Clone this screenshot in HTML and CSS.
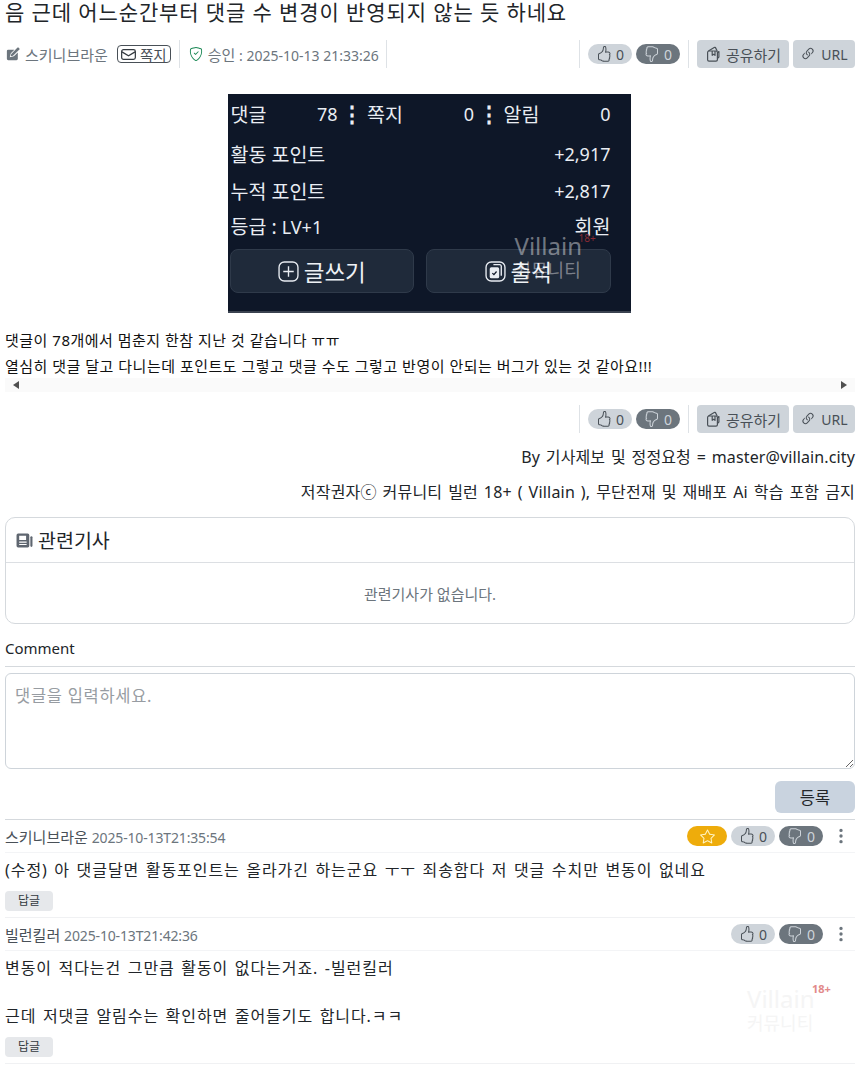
FILE: index.html
```html
<!DOCTYPE html>
<html lang="ko">
<head>
<meta charset="utf-8">
<title>게시글</title>
<link rel="stylesheet" href="styles.css">
</head>
<body>
<svg class="defs" width="0" height="0" aria-hidden="true">
  <symbol id="i-up" viewBox="0 0 16 16"><path d="M8.864.046C7.908-.193 7.02.53 6.956 1.466c-.072 1.051-.23 2.016-.428 2.59-.125.36-.479 1.013-1.04 1.639-.557.623-1.282 1.178-2.131 1.41C2.685 7.288 2 7.87 2 8.72v4.001c0 .845.682 1.464 1.448 1.545 1.07.114 1.564.415 2.068.723l.048.03c.272.165.578.348.97.484.397.136.861.217 1.466.217h3.5c.937 0 1.599-.477 1.934-1.064a1.86 1.86 0 0 0 .254-.912c0-.152-.023-.312-.077-.464.201-.263.38-.578.488-.901.11-.33.172-.762.004-1.149.069-.13.12-.269.159-.403.077-.27.113-.568.113-.857 0-.288-.036-.585-.113-.856a2 2 0 0 0-.138-.362 1.9 1.9 0 0 0 .234-1.734c-.206-.592-.682-1.1-1.2-1.272-.847-.282-1.803-.276-2.516-.211a10 10 0 0 0-.443.05 9.4 9.4 0 0 0-.062-4.509A1.38 1.38 0 0 0 9.125.111zM11.5 14.721H8c-.51 0-.863-.069-1.14-.164-.281-.097-.506-.228-.776-.393l-.04-.024c-.555-.339-1.198-.731-2.49-.868-.333-.036-.554-.29-.554-.55V8.72c0-.254.226-.543.62-.65 1.095-.3 1.977-.996 2.614-1.708.635-.71 1.064-1.475 1.238-1.978.243-.7.407-1.768.482-2.85.025-.362.36-.594.667-.518l.262.066c.16.04.258.143.288.255a8.34 8.34 0 0 1-.145 4.725.5.5 0 0 0 .595.644l.003-.001.014-.003.058-.014a9 9 0 0 1 1.036-.157c.663-.06 1.457-.054 2.11.164.175.058.45.3.57.65.107.308.087.67-.266 1.022l-.353.353.353.354c.043.043.105.141.154.315.048.167.075.37.075.581 0 .212-.027.414-.075.582-.05.174-.111.272-.154.315l-.353.353.353.354c.047.047.109.177.005.488a2.2 2.2 0 0 1-.505.805l-.353.353.353.354c.006.005.041.05.041.17a.9.9 0 0 1-.121.416c-.165.288-.503.56-1.066.56z"/></symbol>
  <symbol id="i-down" viewBox="0 0 16 16"><path transform="matrix(-1 0 0 -1 16 16)" d="M8.864.046C7.908-.193 7.02.53 6.956 1.466c-.072 1.051-.23 2.016-.428 2.59-.125.36-.479 1.013-1.04 1.639-.557.623-1.282 1.178-2.131 1.41C2.685 7.288 2 7.87 2 8.72v4.001c0 .845.682 1.464 1.448 1.545 1.07.114 1.564.415 2.068.723l.048.03c.272.165.578.348.97.484.397.136.861.217 1.466.217h3.5c.937 0 1.599-.477 1.934-1.064a1.86 1.86 0 0 0 .254-.912c0-.152-.023-.312-.077-.464.201-.263.38-.578.488-.901.11-.33.172-.762.004-1.149.069-.13.12-.269.159-.403.077-.27.113-.568.113-.857 0-.288-.036-.585-.113-.856a2 2 0 0 0-.138-.362 1.9 1.9 0 0 0 .234-1.734c-.206-.592-.682-1.1-1.2-1.272-.847-.282-1.803-.276-2.516-.211a10 10 0 0 0-.443.05 9.4 9.4 0 0 0-.062-4.509A1.38 1.38 0 0 0 9.125.111zM11.5 14.721H8c-.51 0-.863-.069-1.14-.164-.281-.097-.506-.228-.776-.393l-.04-.024c-.555-.339-1.198-.731-2.49-.868-.333-.036-.554-.29-.554-.55V8.72c0-.254.226-.543.62-.65 1.095-.3 1.977-.996 2.614-1.708.635-.71 1.064-1.475 1.238-1.978.243-.7.407-1.768.482-2.85.025-.362.36-.594.667-.518l.262.066c.16.04.258.143.288.255a8.34 8.34 0 0 1-.145 4.725.5.5 0 0 0 .595.644l.003-.001.014-.003.058-.014a9 9 0 0 1 1.036-.157c.663-.06 1.457-.054 2.11.164.175.058.45.3.57.65.107.308.087.67-.266 1.022l-.353.353.353.354c.043.043.105.141.154.315.048.167.075.37.075.581 0 .212-.027.414-.075.582-.05.174-.111.272-.154.315l-.353.353.353.354c.047.047.109.177.005.488a2.2 2.2 0 0 1-.505.805l-.353.353.353.354c.006.005.041.05.041.17a.9.9 0 0 1-.121.416c-.165.288-.503.56-1.066.56z"/></symbol>
  <symbol id="i-share" viewBox="0 0 16 16"><g fill="none" stroke="currentColor" stroke-width="1.2" stroke-linejoin="round"><rect x="2.600" y="5" width="9.800" height="10.200" rx="1.400"/><path d="M3.400 5 9.200 1.500a1 1 0 0 1 1.400.4L12.200 5"/><path d="M12.400 6.500 13.900 5.600V11l-1.500 1.500"/><path d="M7.200 5v4.300l1.400-1 1.400 1V5"/></g></symbol>
  <symbol id="i-link" viewBox="0 0 16 16"><path d="M4.715 6.542 3.343 7.914a3 3 0 1 0 4.243 4.243l1.828-1.829A3 3 0 0 0 8.586 5.5L8 6.086a1 1 0 0 0-.154.199 2 2 0 0 1 .861 3.337L6.880 11.450a2 2 0 1 1-2.830-2.830l.793-.792a4 4 0 0 1-.128-1.287z"/><path d="M6.586 4.672A3 3 0 0 0 7.414 9.500l.775-.776a2 2 0 0 1-.896-3.346L9.120 3.550a2 2 0 1 1 2.830 2.830l-.793.792c.112.420.155.855.128 1.287l1.372-1.372a3 3 0 1 0-4.243-4.243z"/></symbol>
  <symbol id="i-dots" viewBox="0 0 16 16"><path d="M9.500 13a1.500 1.500 0 1 1-3 0 1.500 1.500 0 0 1 3 0m0-5a1.500 1.500 0 1 1-3 0 1.500 1.500 0 0 1 3 0m0-5a1.500 1.500 0 1 1-3 0 1.500 1.500 0 0 1 3 0"/></symbol>
</svg>

<main class="page">
  <h1 class="title">음 근데 어느순간부터 댓글 수 변경이 반영되지 않는 듯 하네요</h1>

  <div class="bar meta-bar">
    <span class="meta-item author">
      <svg class="ic" viewBox="0 0 16 16"><path d="M2.500 3H9.500L5.500 7 4.300 11.700 9 10.500l4.500-4.300v7.300a1.500 1.500 0 0 1-1.500 1.500H2.500A1.500 1.500 0 0 1 1 13.500v-9A1.500 1.500 0 0 1 2.500 3Z"/><path d="M13.200.700a.8.8 0 0 1 1.100 0l1 1a.8.8 0 0 1 0 1.100L8 10l-2.600.600L6 8Z"/></svg>
      스키니브라운
    </span>
    <span class="note-btn">
      <svg class="ic-mail" viewBox="0 0 16 16"><rect x=".7" y="2.700" width="14.600" height="10.600" rx="2" fill="none" stroke="currentColor" stroke-width="1.300"/><path d="M1 5.200 8 9.300l7-4.100" fill="none" stroke="currentColor" stroke-width="1.300"/></svg>
      쪽지
    </span>
    <span class="sep"></span>
    <span class="meta-item approved">
      <svg class="ic ic-green" viewBox="0 0 16 16"><path d="M5.338 1.590a61 61 0 0 0-2.837.856.48.48 0 0 0-.328.390c-.554 4.157.726 7.190 2.253 9.188a10.700 10.700 0 0 0 2.287 2.233c.346.244.652.420.893.533q.180.085.293.118a1 1 0 0 0 .101.025 1 1 0 0 0 .100-.025q.114-.034.294-.118c.240-.113.547-.290.893-.533a10.700 10.700 0 0 0 2.287-2.233c1.527-1.997 2.807-5.031 2.253-9.188a.48.48 0 0 0-.328-.390c-.651-.213-1.750-.560-2.837-.855C9.552 1.290 8.531 1.067 8 1.067c-.530 0-1.552.223-2.662.524zM5.072.560C6.157.265 7.310 0 8 0s1.843.265 2.928.560c1.110.300 2.229.655 2.887.870a1.540 1.540 0 0 1 1.044 1.262c.596 4.477-.787 7.795-2.465 9.990a11.800 11.800 0 0 1-2.517 2.453 7 7 0 0 1-1.048.625c-.280.132-.581.240-.829.240s-.548-.108-.829-.240a7 7 0 0 1-1.048-.625 11.800 11.800 0 0 1-2.517-2.453C1.928 10.487.545 7.169 1.141 2.692A1.540 1.540 0 0 1 2.185 1.430 63 63 0 0 1 5.072.560"/><path d="M10.854 5.146a.5.5 0 0 1 0 .708l-3 3a.5.5 0 0 1-.708 0l-1.500-1.500a.5.5 0 1 1 .708-.708L7.500 7.793l2.646-2.647a.5.5 0 0 1 .708 0"/></svg>
      <span><span class="ko">승인</span> : 2025-10-13 21:33:26</span>
    </span>
    <span class="sep sep-m"></span>
    <span class="spacer"></span>
    <span class="sep"></span>
    <span class="pill pill-up"><svg class="ic-vote"><use href="#i-up"/></svg>0</span>
    <span class="pill pill-down"><svg class="ic-vote"><use href="#i-down"/></svg>0</span>
    <span class="sep sep-b"></span>
    <span class="act"><svg class="ic-act"><use href="#i-share"/></svg>공유하기</span>
    <span class="act act-url"><svg class="ic-act"><use href="#i-link"/></svg>URL</span>
  </div>

  <div class="figure">
    <div class="shot">
      <div class="shot-top">
        <span class="cell"><span>댓글</span><span class="num">78</span></span>
        <b class="kebab">⋮</b>
        <span class="cell"><span>쪽지</span><span class="num">0</span></span>
        <b class="kebab">⋮</b>
        <span class="cell"><span>알림</span><span class="num">0</span></span>
      </div>
      <div class="shot-row r1"><span>활동 포인트</span><span class="num">+2,917</span></div>
      <div class="shot-row r2"><span>누적 포인트</span><span class="num">+2,817</span></div>
      <div class="shot-row r3"><span>등급 : <span class="num">LV+1</span></span><span>회원</span></div>
      <div class="shot-btns">
        <span class="shot-btn">
          <svg class="shot-ic" viewBox="0 0 20 20"><rect x="1" y="1" width="18" height="18" rx="5" fill="none" stroke="#e8ecf2" stroke-width="1.300"/><path d="M10 5v10M5 10h10" stroke="#e8ecf2" stroke-width="1.300"/></svg>
          글쓰기
        </span>
        <span class="shot-btn">
          <svg class="shot-ic" viewBox="0 0 20 20"><rect x="1" y="1" width="18" height="18" rx="5" fill="none" stroke="#e8ecf2" stroke-width="1.300"/><path d="M8 3.500h6a1.500 1.500 0 0 1 1.500 1.500v9" fill="none" stroke="#e8ecf2" stroke-width="1.300"/><rect x="4.500" y="6" width="9" height="10.500" rx="1.500" fill="#e8ecf2"/><path d="m7 11.500 1.500 1.500 2.500-3" fill="none" stroke="#0e1728" stroke-width="1.200"/></svg>
          출석
        </span>
      </div>
      <div class="shot-mark"><span class="mark-en">Villain<sup>18+</sup></span><span class="mark-ko">커뮤니티</span></div>
    </div>
  </div>

  <div class="body-text">
    <p>댓글이 78개에서 멈춘지 한참 지난 것 같습니다 ㅠㅠ</p>
    <p>열심히 댓글 달고 다니는데 포인트도 그렇고 댓글 수도 그렇고 반영이 안되는 버그가 있는 것 같아요!!!</p>
  </div>
  <div class="hscroll"><i class="arrow arrow-l"></i><i class="arrow arrow-r"></i></div>

  <div class="bar bottom-bar">
    <span class="sep"></span>
    <span class="pill pill-up"><svg class="ic-vote"><use href="#i-up"/></svg>0</span>
    <span class="pill pill-down"><svg class="ic-vote"><use href="#i-down"/></svg>0</span>
    <span class="sep sep-b"></span>
    <span class="act"><svg class="ic-act"><use href="#i-share"/></svg>공유하기</span>
    <span class="act act-url"><svg class="ic-act"><use href="#i-link"/></svg>URL</span>
  </div>

  <p class="byline">By 기사제보 및 정정요청 = master@villain.city</p>
  <p class="copyright">저작권자ⓒ 커뮤니티 빌런 18+ ( Villain ), 무단전재 및 재배포 Ai 학습 포함 금지</p>

  <section class="card">
    <header class="card-head">
      <svg class="ic-news" viewBox="0 0 16 16"><path d="M2 1.500h9A1.500 1.500 0 0 1 12.500 3v10a1.500 1.500 0 0 1-1.500 1.500H2A1.500 1.500 0 0 1 .5 13V3A1.500 1.500 0 0 1 2 1.500ZM3 3.500v4h6.500v-4Zm0 5.500v1h7V9Zm0 2.200v1h7v-1Z" fill-rule="evenodd"/><rect x="13.500" y="4" width="2" height="10" rx="1"/></svg>
      <span class="card-title">관련기사</span>
    </header>
    <div class="card-body">관련기사가 없습니다.</div>
  </section>

  <h2 class="comment-label">Comment</h2>
  <textarea class="comment-input" placeholder="댓글을 입력하세요."></textarea>
  <div class="submit-row"><button class="submit" type="button">등록</button></div>

  <article class="comment first">
    <div class="c-head">
      <span class="c-who">스키니브라운 <span class="c-date">2025-10-13T21:35:54</span></span>
      <span class="pill pill-star"><svg class="ic-star" viewBox="0 0 16 16"><path d="M2.866 14.850c-.078.444.360.791.746.593l4.390-2.256 4.389 2.256c.386.198.824-.149.746-.592l-.830-4.730 3.522-3.356c.330-.314.160-.888-.282-.950l-4.898-.696L8.465.792a.513.513 0 0 0-.927 0L5.354 5.120l-4.898.696c-.441.062-.612.636-.283.950l3.523 3.356-.830 4.730zm4.905-2.767-3.686 1.894.694-3.957a.560.560 0 0 0-.163-.505L1.710 6.745l4.052-.576a.530.530 0 0 0 .393-.288L8 2.223l1.847 3.658a.530.530 0 0 0 .393.288l4.052.575-2.906 2.770a.560.560 0 0 0-.163.506l.694 3.957-3.686-1.894a.500.500 0 0 0-.461 0z"/></svg></span>
      <span class="pill pill-up"><svg class="ic-vote"><use href="#i-up"/></svg>0</span>
      <span class="pill pill-down"><svg class="ic-vote"><use href="#i-down"/></svg>0</span>
      <svg class="ic-dots"><use href="#i-dots"/></svg>
    </div>
    <div class="c-body">
      <p>(수정) 아 댓글달면 활동포인트는 올라가긴 하는군요 ㅜㅜ 죄송함다 저 댓글 수치만 변동이 없네요</p>
      <span class="reply">답글</span>
    </div>
  </article>

  <article class="comment">
    <div class="c-head">
      <span class="c-who">빌런킬러 <span class="c-date">2025-10-13T21:42:36</span></span>
      <span class="pill pill-up"><svg class="ic-vote"><use href="#i-up"/></svg>0</span>
      <span class="pill pill-down"><svg class="ic-vote"><use href="#i-down"/></svg>0</span>
      <svg class="ic-dots"><use href="#i-dots"/></svg>
    </div>
    <div class="c-body">
      <p>변동이 적다는건 그만큼 활동이 없다는거죠. -빌런킬러</p>
      <p class="c-gap">근데 저댓글 알림수는 확인하면 줄어들기도 합니다.ㅋㅋ</p>
      <span class="reply">답글</span>
    </div>
  </article>

  <div class="page-mark"><span class="pm-en">Villain<sup>18+</sup></span><span class="pm-ko">커뮤니티</span></div>
</main>
</body>
</html>
```

FILE: styles.css
```css
* { box-sizing: border-box; }
html, body { margin: 0; padding: 0; background: #fff; }
body {
  font-family: "Noto Sans", "Noto Sans CJK KR", sans-serif;
  color: #212529;
  font-size: 15px;
  overflow: hidden;
  height: 1066px;
}
.defs { position: absolute; }
.page { position: relative; padding: 0 9px 0 5px; }
p { margin: 0; }

.title {
  margin: 0;
  height: 24px;
  font-size: 21px;
  line-height: 24px;
  font-weight: 400;
  letter-spacing: 0.88px;
  color: #212529;
  white-space: nowrap;
}

.bar { display: flex; align-items: center; height: 28px; }
.meta-bar { margin-top: 16px; }
.bottom-bar { justify-content: flex-end; margin-top: 13px; }
.spacer { flex: 1; }
.sep { width: 1px; height: 28px; background: #dee2e6; margin: 0 8px 0 0; }
.sep-m { margin-left: 7px; }
.sep-b { margin: 0 8px 0 8px; }
.meta-item { display: inline-flex; align-items: center; gap: 5px; font-size: 14px; color: #6c757d; white-space: nowrap; }
.author { font-size: 15px; padding-left: 1px; }
.approved { padding-left: 1px; }
.ko { font-size: 15px; }
.ic { width: 14px; height: 14px; fill: #6c757d; flex: none; }
.ic-green { fill: #198754; }
.note-btn {
  display: inline-flex; align-items: center; justify-content: center; gap: 4px;
  margin: 0 8px 0 9px; height: 18px; width: 54px;
  border: 1px solid #495057; border-radius: 4px;
  font-size: 14.500px; color: #495057; white-space: nowrap;
}
.ic-mail { width: 15px; height: 15px; color: #343a40; flex: none; }

.pill {
  display: inline-flex; align-items: center; justify-content: center; gap: 4px;
  height: 20px; border-radius: 10px; font-size: 14px; flex: none; padding: 0 6px;
}
.pill-up { background: #ced4da; color: #495057; width: 44px; margin-right: 4px; }
.pill-down { background: #6c757d; color: #ced4da; width: 44px; }
.pill-star { background: #eeac0b; width: 40px; margin-right: 4px; }
.ic-vote { width: 16px; height: 16px; fill: currentColor; }
.ic-star { width: 15px; height: 15px; fill: #fff6c8; }

.act {
  display: inline-flex; align-items: center; justify-content: center; gap: 5px;
  height: 28px; border-radius: 4px; background: #ced4da; color: #495057; font-size: 15px;
  width: 92px; margin-right: 4px; white-space: nowrap;
}
.act-url { width: 62px; margin-right: 0; font-size: 14px; }
.ic-act { width: 16px; height: 16px; fill: currentColor; }

.figure { display: flex; justify-content: center; margin-top: 26px; padding-right: 2px; }
.shot {
  position: relative;
  width: 403px; height: 219px;
  background: #0e1728;
  color: #e9edf3;
  padding: 6px 20px 0 3px;
  font-size: 19.500px;
  border-bottom: 2px solid #3a4250;
}
.num { font-size: 18px; }
.shot-top { display: flex; align-items: center; height: 27px; }
.cell { display: flex; justify-content: space-between; align-items: center; flex: 1; }
.kebab { width: 29.500px; flex: none; text-align: center; font-size: 22px; font-weight: 700; line-height: 27px; }
.shot-row { display: flex; justify-content: space-between; align-items: center; }
.r1 { margin-top: 8px; height: 37px; }
.r2 { height: 37px; }
.r3 { height: 33px; }
.shot-btns { display: flex; gap: 12px; margin: 7px 0 0 -1px; }
.shot-btn {
  flex: 1; height: 44px;
  display: flex; align-items: center; justify-content: center; gap: 5px;
  background: #1f2a3a; border: 1px solid #2f3a4a; border-radius: 8px;
  font-size: 22.500px; color: #eef1f5;
}
.shot-ic { width: 21px; height: 21px; }
.shot-mark {
  position: absolute; left: 287px; top: 138px;
  display: flex; flex-direction: column;
  color: rgba(255,255,255,.42);
}
.mark-en { font-size: 24px; line-height: 28px; }
.mark-en sup { position: absolute; left: 64px; top: 0; font-size: 10px; color: #8a2a33; line-height: 12px; }
.mark-ko { font-size: 18px; line-height: 20px; }

.body-text { margin-top: 14px; font-size: 15px; line-height: 26px; letter-spacing: 0.5px; color: #111; white-space: nowrap; }
.hscroll { position: relative; height: 14px; margin-top: -1px; background: #fafafa; }
.arrow { position: absolute; top: 3px; width: 0; height: 0; border-style: solid; border-width: 4px 0 4px 6px; border-color: transparent transparent transparent #505050; }
.arrow-l { left: 8px; transform: scaleX(-1); }
.arrow-r { right: 8px; }

.byline, .copyright { text-align: right; font-size: 16px; line-height: 22px; word-spacing: 1.500px; color: #212529; }
.byline { margin-top: 13px; letter-spacing: 0.12px; }
.copyright { margin-top: 13px; letter-spacing: 0.2px; }

.card { margin-top: 14px; height: 107px; border: 1px solid #d5d9dd; border-radius: 10px; }
.card-head {
  display: flex; align-items: center; gap: 5px;
  height: 45px; padding-left: 10px;
  border-bottom: 1px solid #dcdfe3;
  font-size: 19.500px; color: #212529;
}
.card-title { position: relative; top: -1px; }
.ic-news { width: 17px; height: 17px; fill: #5f6670; }
.card-body { height: 60px; display: flex; align-items: center; justify-content: center; font-size: 15px; color: #6c757d; }

.comment-label {
  margin: 14px 0 0;
  height: 29px;
  font-size: 15px; line-height: 20px; font-weight: 400; color: #212529;
  border-bottom: 1px solid #d5d9dd;
}
.comment-input {
  display: block; width: 100%; height: 96px; margin-top: 6px; padding: 9px;
  border: 1px solid #ced4da; border-radius: 6px;
  font-family: inherit; font-size: 16.500px; letter-spacing: 0.7px; resize: vertical;
}
.comment-input::placeholder { color: #979ca2; }
.submit-row { display: flex; justify-content: flex-end; margin-top: 12px; }
.submit {
  width: 80px; height: 32px; border: 0; border-radius: 6px;
  background: #c9d3df; color: #212529; font-family: inherit; font-size: 16.500px;
}

.comment { border-bottom: 1px solid #f0f1f3; }
.first { margin-top: 6px; border-top: 1px solid #d5d9dd; }
.c-head { display: flex; align-items: center; height: 33px; border-bottom: 1px solid #f3f4f6; }
.c-who { flex: 1; font-size: 15px; color: #495057; }
.c-date { color: #6c757d; font-size: 14px; letter-spacing: -0.15px; }
.ic-dots { width: 18px; height: 18px; margin: 0 5px 0 9px; fill: #6c757d; }
.c-body { padding: 5px 0 6px; font-size: 16px; line-height: 24px; color: #212529; letter-spacing: 0.93px; word-spacing: 1.500px; }
.c-gap { margin-top: 24px; }
.reply {
  display: block; width: 48px; height: 20px; line-height: 20px; margin-top: 9px;
  text-align: center; border-radius: 4px; background: #e6e8eb; color: #343a40; font-size: 12px; letter-spacing: 0; word-spacing: 0;
}
.page-mark {
  position: absolute; left: 747px; top: 985px;
  display: flex; flex-direction: column; color: #f5f5f5;
}
.pm-en { font-size: 24px; line-height: 28px; }
.pm-en sup { position: absolute; left: 65px; top: -3px; font-size: 11px; font-weight: 700; line-height: 14px; color: #e28a8a; }
.pm-ko { font-size: 18px; line-height: 20px; }
```
